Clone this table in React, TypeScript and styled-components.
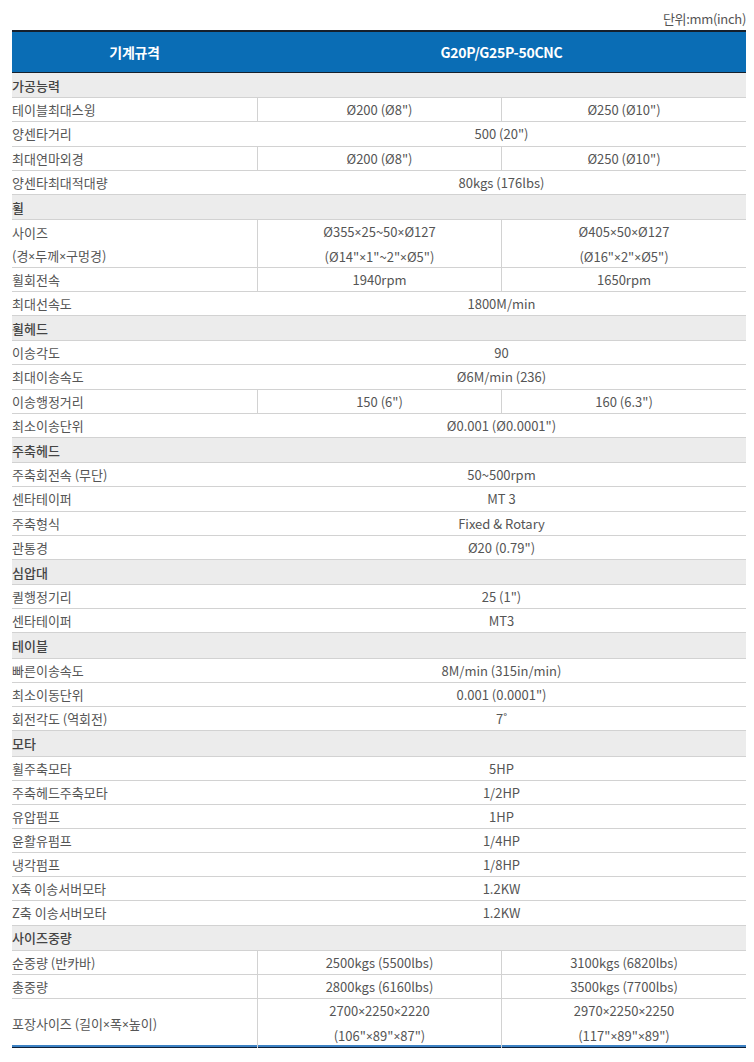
import styled, { createGlobalStyle } from "styled-components";

const GlobalStyle = createGlobalStyle`
  body {
    margin: 0;
    background: #ffffff;
    font-family: "Noto Sans CJK KR", "Noto Sans", sans-serif;
  }
`;

type Spec = {
  label: string[];
  values: string[][];
};

type Section = {
  title: string;
  rows: Spec[];
};

const one = (label: string, ...values: string[]): Spec => ({
  label: [label],
  values: values.map((v) => [v]),
});

const sections: Section[] = [
  {
    title: "가공능력",
    rows: [
      one("테이블최대스윙", "Ø200 (Ø8\")", "Ø250 (Ø10\")"),
      one("양센타거리", "500 (20\")"),
      one("최대연마외경", "Ø200 (Ø8\")", "Ø250 (Ø10\")"),
      one("양센타최대적대량", "80kgs (176lbs)"),
    ],
  },
  {
    title: "휠",
    rows: [
      {
        label: ["사이즈", "(경×두께×구멍경)"],
        values: [
          ["Ø355×25~50×Ø127", "(Ø14\"×1\"~2\"×Ø5\")"],
          ["Ø405×50×Ø127", "(Ø16\"×2\"×Ø5\")"],
        ],
      },
      one("휠회전속", "1940rpm", "1650rpm"),
      one("최대선속도", "1800M/min"),
    ],
  },
  {
    title: "휠헤드",
    rows: [
      one("이송각도", "90"),
      one("최대이송속도", "Ø6M/min (236)"),
      one("이송행정거리", "150 (6\")", "160 (6.3\")"),
      one("최소이송단위", "Ø0.001 (Ø0.0001\")"),
    ],
  },
  {
    title: "주축헤드",
    rows: [
      one("주축회전속 (무단)", "50~500rpm"),
      one("센타테이퍼", "MT 3"),
      one("주축형식", "Fixed & Rotary"),
      one("관통경", "Ø20 (0.79\")"),
    ],
  },
  {
    title: "심압대",
    rows: [one("퀼행정기리", "25 (1\")"), one("센타테이퍼", "MT3")],
  },
  {
    title: "테이블",
    rows: [
      one("빠른이송속도", "8M/min (315in/min)"),
      one("최소이동단위", "0.001 (0.0001\")"),
      one("회전각도 (역회전)", "7˚"),
    ],
  },
  {
    title: "모타",
    rows: [
      one("휠주축모타", "5HP"),
      one("주축헤드주축모타", "1/2HP"),
      one("유압펌프", "1HP"),
      one("윤활유펌프", "1/4HP"),
      one("냉각펌프", "1/8HP"),
      one("X축 이송서버모타", "1.2KW"),
      one("Z축 이송서버모타", "1.2KW"),
    ],
  },
  {
    title: "사이즈중량",
    rows: [
      one("순중량 (반카바)", "2500kgs (5500lbs)", "3100kgs (6820lbs)"),
      one("총중량", "2800kgs (6160lbs)", "3500kgs (7700lbs)"),
      {
        label: ["포장사이즈 (길이×폭×높이)"],
        values: [
          ["2700×2250×2220", "(106\"×89\"×87\")"],
          ["2970×2250×2250", "(117\"×89\"×89\")"],
        ],
      },
    ],
  },
];

// #region styles

const Page = styled.div`
  padding: 8px 8px 0 12px;
  color: #555555;
  font-size: 13px;
`;

const Unit = styled.div`
  text-align: right;
  font-size: 13px;
  line-height: 22px;
  color: #555555;
  letter-spacing: -0.3px;
`;

const Sheet = styled.div`
  width: 734px;
  display: flex;
  flex-direction: column;
  border-bottom: 1.5px solid #0c1e38;
`;

const Head = styled.div`
  display: grid;
  grid-template-columns: 245px 1fr;
  height: 43px;
  background: #0a6db5;
  border-top: 2px solid #16202c;
  border-bottom: 1.5px solid #16202c;
  box-sizing: border-box;
  color: #ffffff;
  font-weight: 700;
  font-size: 14px;
`;

const HeadCell = styled.div`
  display: flex;
  align-items: center;
  justify-content: center;
  letter-spacing: -0.3px;
`;

const SectionRow = styled.div`
  height: 25.3px;
  box-sizing: border-box;
  display: flex;
  align-items: center;
  background: #ececec;
  border-bottom: 1px solid #d2d2d2;
  color: #444444;
  font-weight: 500;
`;

const Row = styled.div<{ $lines: number; $last?: boolean }>`
  display: grid;
  grid-template-columns: 245px 244px 245px;
  height: ${(p) => (p.$lines > 1 ? 47.5 : 24.17)}px;
  box-sizing: border-box;
  border-bottom: ${(p) =>
    p.$last ? "2.5px solid #3d82c4" : "1px solid #d2d2d2"};
`;

const Label = styled.div`
  display: flex;
  flex-direction: column;
  justify-content: center;
  line-height: 23.5px;
  white-space: nowrap;
`;

const Value = styled.div<{ $span?: boolean; $split?: boolean }>`
  grid-column: ${(p) => (p.$span ? "span 2" : "auto")};
  display: flex;
  flex-direction: column;
  align-items: center;
  justify-content: center;
  line-height: 23.5px;
  white-space: nowrap;
  border-left: ${(p) => (p.$split ? "1px solid #d2d2d2" : "none")};
`;

// the CJK font draws × full width; the reference has the narrow latin one
const Mul = styled.span`
  font-family: "Noto Sans", "DejaVu Sans", sans-serif;
  font-size: 12px;
`;

// #endregion

function Text({ text }: { text: string }) {
  const parts = text.split("×");
  return (
    <span>
      {parts.map((part, i) => (
        <span key={i}>
          {i > 0 && <Mul>{"×"}</Mul>}
          {part}
        </span>
      ))}
    </span>
  );
}

export default function App() {
  return (
    <>
      <GlobalStyle />
      <Page>
        <Unit>{"단위:mm(inch)"}</Unit>
        <Sheet>
          <Head>
            <HeadCell>{"기계규격"}</HeadCell>
            <HeadCell>{"G20P/G25P-50CNC"}</HeadCell>
          </Head>
          {sections.map((section, si) => (
            <div key={section.title}>
              <SectionRow>{section.title}</SectionRow>
              {section.rows.map((row, ri) => {
                const lines = Math.max(
                  row.label.length,
                  ...row.values.map((v) => v.length)
                );
                const last =
                  si === sections.length - 1 && ri === section.rows.length - 1;
                const split = row.values.length > 1;
                return (
                  <Row key={ri} $lines={lines} $last={last}>
                    <Label>
                      {row.label.map((l) => (
                        <Text key={l} text={l} />
                      ))}
                    </Label>
                    {row.values.map((v, vi) => (
                      <Value key={vi} $span={!split} $split={split}>
                        {v.map((line) => (
                          <Text key={line} text={line} />
                        ))}
                      </Value>
                    ))}
                  </Row>
                );
              })}
            </div>
          ))}
        </Sheet>
      </Page>
    </>
  );
}
